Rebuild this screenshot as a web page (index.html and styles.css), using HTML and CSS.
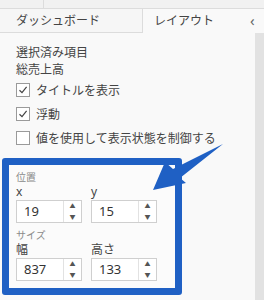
FILE: index.html
```html
<!DOCTYPE html>
<html>
<head>
  <meta charset="utf-8">
  <link rel="stylesheet" href="styles.css">
  <title>レイアウト</title>
</head>
<body>
  <div class="top"><div class="top-left"></div></div>

  <div class="tabs">
    <div class="tab">ダッシュボード</div>
    <div class="tab active">レイアウト</div>
    <div class="collapse">&lsaquo;</div>
  </div>

  <div class="main">
    <div class="pane">
      <div class="caption">選択済み項目</div>
      <div class="caption">総売上高</div>

      <label class="check">
        <span class="box"><svg width="10" height="10" viewBox="0 0 10 10"><path d="M1.5 5.2 L4 7.6 L8.6 1.8" fill="none" stroke="#444" stroke-width="1.2"/></svg></span>
        タイトルを表示
      </label>
      <label class="check">
        <span class="box"><svg width="10" height="10" viewBox="0 0 10 10"><path d="M1.5 5.2 L4 7.6 L8.6 1.8" fill="none" stroke="#444" stroke-width="1.2"/></svg></span>
        浮動
      </label>
      <label class="check">
        <span class="box"></span>
        値を使用して表示状態を制御する
      </label>

      <div class="frame">
        <div class="group">位置</div>
        <div class="fields">
          <div class="field">
            <div class="lbl">x</div>
            <div class="spin"><span class="val">19</span><span class="arrows"><span>&#9650;</span><span>&#9660;</span></span></div>
          </div>
          <div class="field">
            <div class="lbl">y</div>
            <div class="spin"><span class="val">15</span><span class="arrows"><span>&#9650;</span><span>&#9660;</span></span></div>
          </div>
        </div>

        <div class="group second">サイズ</div>
        <div class="fields">
          <div class="field">
            <div class="lbl">幅</div>
            <div class="spin"><span class="val">837</span><span class="arrows"><span>&#9650;</span><span>&#9660;</span></span></div>
          </div>
          <div class="field">
            <div class="lbl">高さ</div>
            <div class="spin"><span class="val">133</span><span class="arrows"><span>&#9650;</span><span>&#9660;</span></span></div>
          </div>
        </div>
      </div>
    </div>
    <div class="scroll"></div>
  </div>

  <!-- annotation arrow -->
  <svg class="arrow" width="264" height="300" viewBox="0 0 264 300">
    <polygon points="153,190 165,162 173,169 223,144 180,178 186,183" fill="#1f60c4"/>
  </svg>
</body>
</html>
```

FILE: styles.css
```css
body {
  margin: 0;
  width: 264px;
  height: 300px;
  overflow: hidden;
  position: relative;
  background-color: #f9f9f9;
  color: #444;
  font-family: "Noto Sans", "Noto Sans CJK JP", sans-serif;
  font-size: 12px;
}

.top {
  height: 8px;
  background-color: #f1f1f1;
  border-bottom: 1px solid #dcdcdc;
}

.top-left {
  width: 43px;
  height: 8px;
  border-right: 1px solid #dcdcdc;
}

.tabs {
  display: flex;
  height: 24px;
}

.tab {
  padding-left: 16px;
  line-height: 24px;
  box-sizing: border-box;
}

.tab:first-child {
  width: 143px;
  background-color: #f6f6f6;
  border-bottom: 1px solid #dcdcdc;
  border-right: 1px solid #dcdcdc;
}

.tab.active {
  flex: 1;
  padding-left: 11px;
  background-color: #f9f9f9;
}

.collapse {
  width: 14px;
  line-height: 22px;
  font-size: 15px;
  color: #666;
}

.main {
  display: flex;
  height: 267px;
}

.pane {
  flex: 1;
  padding: 11px 0 0 16px;
}

.scroll {
  width: 9px;
  background-color: #e2e2e2;
}

.caption {
  line-height: 17px;
}

.check {
  display: flex;
  align-items: center;
  height: 24px;
  gap: 6px;
}

.box {
  width: 12px;
  height: 12px;
  border: 1px solid #9a9a9a;
  background-color: #fff;
  display: flex;
  align-items: center;
  justify-content: center;
}

.frame {
  margin: 8px 0 0 -14px;
  width: 159px;
  border: 7px solid #1f60c4;
  border-radius: 3px;
  padding: 5px 0 7px 7px;
  background-color: #fbfbfb;
}

.group {
  font-size: 10px;
  line-height: 14px;
  color: #8a8a8a;
}

.group.second {
  margin-top: 5px;
}

.fields {
  display: flex;
  gap: 9px;
}

.lbl {
  line-height: 16px;
  font-size: 12px;
}

.spin {
  width: 66px;
  height: 23px;
  box-sizing: border-box;
  border: 1px solid #cfcfcf;
  background-color: #fff;
  display: flex;
}

.val {
  flex: 1;
  padding-left: 7px;
  line-height: 21px;
  font-size: 13px;
  color: #333;
}

.arrows {
  width: 17px;
  border-left: 1px solid #e2e2e2;
  display: flex;
  flex-direction: column;
}

.arrows span {
  flex: 1;
  text-align: center;
  font-size: 6px;
  line-height: 10px;
  color: #555;
}

.arrow {
  position: absolute;
  left: 0;
  top: 0;
  pointer-events: none;
}
```
